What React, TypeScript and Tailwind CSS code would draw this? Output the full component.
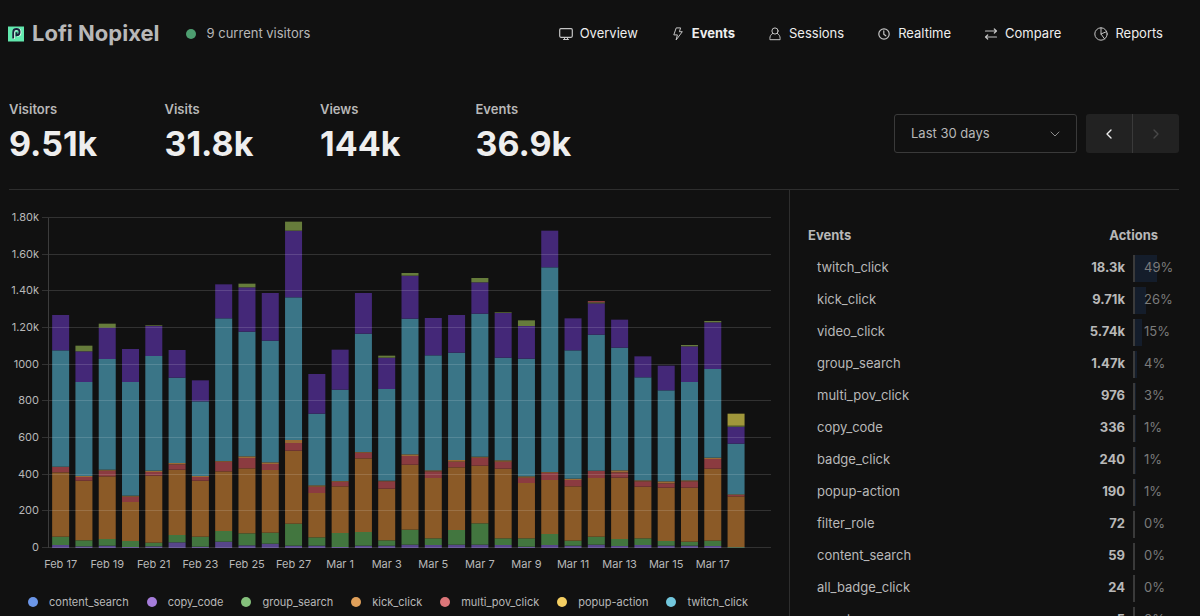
import type { ReactNode } from "react";
import { ChevronDown, ChevronLeft, ChevronRight } from "lucide-react";

const Icon = ({ children }: { children: ReactNode }) => (
  <svg
    viewBox="0 0 14 14"
    className="h-[14px] w-[14px] text-[#c4c4c4]"
    fill="none"
    stroke="currentColor"
    strokeWidth="1"
    strokeLinecap="round"
    strokeLinejoin="round"
    aria-hidden="true"
  >
    {children}
  </svg>
);

const navItems = [
  {
    label: "Overview",
    icon: (
      <Icon>
        <rect x="0.7" y="1.7" width="12.6" height="8.6" rx="1.2" strokeWidth="1.2" />
        <path d="M5.5 10.5v1.8M8.5 10.5v1.8M4.5 12.5h5" />
      </Icon>
    ),
  },
  {
    label: "Events",
    active: true,
    icon: (
      <Icon>
        <path d="M5.6 0.9h4L8.4 4.7h2.9L5.1 13l1.3-5.1H3.2z" />
      </Icon>
    ),
  },
  {
    label: "Sessions",
    icon: (
      <Icon>
        <circle cx="7" cy="4" r="3.1" />
        <path d="M4.7 6.4C2.8 7.5 1.9 9.2 1.9 11.4v1.3h10.2v-1.3c0-2.2-.9-3.9-2.8-5" />
      </Icon>
    ),
  },
  {
    label: "Realtime",
    icon: (
      <Icon>
        <circle cx="7" cy="7" r="5.2" strokeWidth="1.2" />
        <path d="M6.8 3.9v3.3l2 1.6" strokeWidth="1.2" />
      </Icon>
    ),
  },
  {
    label: "Compare",
    icon: (
      <Icon>
        <path d="M1.5 4h11M10.3 2l2.2 2-2.2 2M12.5 10h-11M3.7 8l-2.2 2 2.2 2" strokeWidth="1.2" />
      </Icon>
    ),
  },
  {
    label: "Reports",
    icon: (
      <Icon>
        <circle cx="7" cy="7" r="6.2" />
        <path d="M7 0.8V7l3.6 5M7 7l5.7-2.4" />
      </Icon>
    ),
  },
];

const stats = [
  { label: "Visitors", value: "9.51k" },
  { label: "Visits", value: "31.8k" },
  { label: "Views", value: "144k" },
  { label: "Events", value: "36.9k" },
];

const events = [
  { name: "twitch_click", count: "18.3k", percent: 49 },
  { name: "kick_click", count: "9.71k", percent: 26 },
  { name: "video_click", count: "5.74k", percent: 15 },
  { name: "group_search", count: "1.47k", percent: 4 },
  { name: "multi_pov_click", count: "976", percent: 3 },
  { name: "copy_code", count: "336", percent: 1 },
  { name: "badge_click", count: "240", percent: 1 },
  { name: "popup-action", count: "190", percent: 1 },
  { name: "filter_role", count: "72", percent: 0 },
  { name: "content_search", count: "59", percent: 0 },
  { name: "all_badge_click", count: "24", percent: 0 },
  { name: "event", count: "5", percent: 0 },
];

const legend = [
  { name: "content_search", color: "bg-[#6b96e8]" },
  { name: "copy_code", color: "bg-[#a67ddb]" },
  { name: "group_search", color: "bg-[#85c17c]" },
  { name: "kick_click", color: "bg-[#e0a05a]" },
  { name: "multi_pov_click", color: "bg-[#dc7679]" },
  { name: "popup-action", color: "bg-[#f5cf62]" },
  { name: "twitch_click", color: "bg-[#72c7dd]" },
];

// Top edge of every layer in a day's stack, bottom layer first.
// The axis runs from 1027 (zero) up to 37 (1.80k).
const days = [
  [1018, 993, 800, 784, 783, 434, 328],
  [1022, 1004, 825, 814, 811, 529, 437, 420],
  [1020, 1000, 812, 795, 792, 460, 366, 354],
  [1024, 1006, 889, 873, 870, 529, 430],
  [1022, 1011, 810, 799, 795, 451, 361, 359],
  [1010, 988, 792, 776, 772, 516, 433],
  [1023, 993, 825, 814, 811, 587, 524],
  [1008, 976, 797, 768, 766, 338, 236],
  [1019, 983, 788, 757, 752, 378, 245, 234],
  [1014, 981, 793, 775, 770, 405, 262],
  [1020, 954, 735, 712, 703, 275, 75, 48],
  [1020, 995, 862, 843, 839, 624, 505],
  [1024, 982, 842, 828, 826, 552, 432],
  [1020, 979, 758, 741, 739, 384, 262],
  [1020, 1004, 849, 827, 825, 550, 456, 450],
  [1017, 972, 777, 751, 746, 339, 210, 202],
  [1018, 998, 817, 797, 794, 449, 337],
  [1017, 973, 785, 768, 763, 441, 328],
  [1017, 953, 780, 756, 753, 324, 230, 217],
  [1018, 998, 789, 768, 764, 456, 322, 320],
  [1023, 998, 832, 816, 812, 459, 361, 344],
  [1018, 985, 823, 801, 799, 185, 75],
  [1020, 1005, 842, 823, 819, 434, 338],
  [1017, 993, 817, 796, 795, 387, 293, 290, 286],
  [1021, 1000, 816, 800, 794, 426, 342],
  [1018, 998, 843, 827, 824, 515, 452],
  [1020, 1006, 846, 833, 827, 554, 480],
  [1020, 1008, 846, 827, 824, 529, 422, 418],
  [1021, 1005, 789, 760, 756, 490, 350, 346],
  [1026, 1024, 872, 868, 866, 714, 663, 660, 624],
];

const layerColors = ["#57468a", "#42763f", "#8b5a27", "#8b3b40", "#9a6a35", "#3a7587", "#442878", "#667c3b", "#a0973b"];
const yTicks = ["1.80k", "1.60k", "1.40k", "1.20k", "1000", "800", "600", "400", "200", "0"];
const xTicks = [
  "Feb 17", "Feb 19", "Feb 21", "Feb 23", "Feb 25", "Feb 27", "Mar 1", "Mar 3",
  "Mar 5", "Mar 7", "Mar 9", "Mar 11", "Mar 13", "Mar 15", "Mar 17",
];

const PLOT_LEFT = 40;
const PLOT_TOP = 28;
const PLOT_BOTTOM = 358;
const PLOT_RIGHT = 762;
const STEP = (PLOT_RIGHT - PLOT_LEFT) / 31;

const toY = (edge: number) => PLOT_BOTTOM - (1027 - edge) / 3;

const EventsChart = () => (
  <svg viewBox="0 0 780 390" className="block w-full" role="img" aria-label="Events per day">
    {days.map((tops, day) =>
      tops.map((top, layer) => {
        const bottom = layer === 0 ? 1027 : tops[layer - 1];
        // Mar 12 is topped with a sliver of red instead of yellow
        const fill = day === 23 && layer === 8 ? "#8b3b40" : layerColors[layer];
        return (
          <rect
            key={`${day}-${layer}`}
            x={PLOT_LEFT + STEP * (day + 0.5) - 8.5}
            y={toY(top)}
            width="17"
            height={(bottom - top) / 3}
            fill={fill}
          />
        );
      }),
    )}
    {yTicks.map((label, i) => {
      const y = PLOT_TOP + ((PLOT_BOTTOM - PLOT_TOP) / 9) * i;
      return (
        <g key={label}>
          <rect x={PLOT_LEFT - 7} y={Math.round(y) - 1} width={PLOT_RIGHT - PLOT_LEFT + 7} height="1" fill="#fff" fillOpacity="0.14" />
          <text x="30" y={y + 3} fontSize="11" textAnchor="end" fill="#b8b8b8">
            {label}
          </text>
        </g>
      );
    })}
    <rect x={PLOT_LEFT - 1} y={PLOT_TOP} width="1" height={PLOT_BOTTOM - PLOT_TOP} fill="#3c3c3c" />
    {xTicks.map((label, i) => (
      <text key={label} x={PLOT_LEFT + STEP * (i * 2 + 0.5)} y="378" fontSize="11" textAnchor="middle" fill="#b8b8b8">
        {label}
      </text>
    ))}
  </svg>
);

const Logo = () => (
  <svg viewBox="0 0 16 16" className="h-4 w-4" aria-hidden="true">
    <rect y="0.5" width="16" height="15" fill="#62e8ae" />
    <path d="M5.8 13V6.5C5.8 4.200 7.200 3.200 9 3.200s3.300 1.200 3.300 3.100S11 9.600 9 9.600" fill="none" stroke="#e3fff2" strokeWidth="2.400" />
    <path d="M5.200 12.600V6.400C5.200 4 6.700 3 8.500 3s3.100 1.200 3.100 3.100-1.300 3.300-3.100 3.300V6.200" fill="none" stroke="#17213a" strokeWidth="1.900" />
  </svg>
);

export default function App() {
  return (
    <div className="h-screen overflow-hidden bg-[#111111] pr-[21px] pl-2 font-['Inter',sans-serif] text-[13px] text-[#b8b8b8]">
      <header className="flex h-[67px] items-center justify-between">
        <div className="flex items-center">
          <Logo />
          <h1 className="ml-2 text-[22px] font-bold">Lofi Nopixel</h1>
          <span className="ml-[26px] h-[10px] w-[10px] rounded-full bg-[#4d9e70]" />
          <span className="ml-[11px]">9 current visitors</span>
        </div>
        <nav className="mr-4 flex gap-[33px]">
          {navItems.map((item) => (
            <a
              key={item.label}
              href="#"
              className={`flex items-center gap-[7px] text-[#eeeeee] ${item.active ? "font-bold" : "font-normal"}`}
            >
              {item.icon}
              {item.label}
            </a>
          ))}
        </nav>
      </header>

      <section className="ml-px flex h-[122px] items-center justify-between pt-[11px]">
        <dl className="grid w-[622px] grid-cols-4">
          {stats.map((stat) => (
            <div key={stat.label}>
              <dt className="leading-5 font-semibold">{stat.label}</dt>
              <dd className="text-[34px] leading-[50px] font-bold text-[#eeeeee]">{stat.value}</dd>
            </div>
          ))}
        </dl>
        <div className="flex gap-[9px]">
          <div className="relative">
            <select
              aria-label="Date range"
              className="h-[39px] w-[183px] appearance-none rounded-[3px] border border-[#3a3a3a] bg-transparent px-4 text-[#b8b8b8]"
            >
              <option>Last 30 days</option>
            </select>
            <ChevronDown strokeWidth={1.5} className="pointer-events-none absolute top-3 right-[14px] h-4 w-4 text-[#8b8b8b]" />
          </div>
          <div className="flex overflow-hidden rounded-[3px] bg-[#222222]">
            <button aria-label="Previous period" className="flex h-[39px] w-[46px] items-center justify-center text-[#eeeeee]">
              <ChevronLeft className="h-4 w-4" />
            </button>
            <button
              aria-label="Next period"
              disabled
              className="flex h-[39px] w-[47px] items-center justify-center border-l border-[#3a3a3a] text-[#484848]"
            >
              <ChevronRight className="h-4 w-4" />
            </button>
          </div>
        </div>
      </section>

      <main className="ml-px grid grid-cols-3 border-t border-[#2e2e2e]">
        <div className="col-span-2">
          <EventsChart />
          <ul className="flex flex-wrap gap-x-[18px] pt-3 pl-[19px] text-[11px] leading-5">
            {legend.map((item) => (
              <li key={item.name} className="flex items-center gap-[11px]">
                <span className={`h-[10px] w-[10px] rounded-full ${item.color}`} />
                {item.name}
              </li>
            ))}
          </ul>
        </div>
        <div className="border-l border-[#2e2e2e] pt-[30px] pl-[18px]">
          <table className="w-full border-collapse">
            <thead>
              <tr className="h-8 font-bold">
                <th className="p-0 text-left">Events</th>
                <th colSpan={2} className="p-0 pr-[21px] text-right">
                  Actions
                </th>
              </tr>
            </thead>
            <tbody>
              {events.map((event) => (
                <tr key={event.name} className="h-8">
                  <td className="p-0 pl-[9px]">{event.name}</td>
                  <td className="p-0 pr-2 text-right font-bold">{event.count}</td>
                  <td className="w-[46px] p-0">
                    <div className="relative flex h-[27px] items-center border-l-2 border-[#3a3a3a] pl-[9px] text-[#7b7b7b]">
                      <span className="absolute inset-y-0 left-0 bg-[#141d2b]" style={{ width: `${event.percent}%` }} />
                      <span className="relative">{event.percent}%</span>
                    </div>
                  </td>
                </tr>
              ))}
            </tbody>
          </table>
        </div>
      </main>
    </div>
  );
}
